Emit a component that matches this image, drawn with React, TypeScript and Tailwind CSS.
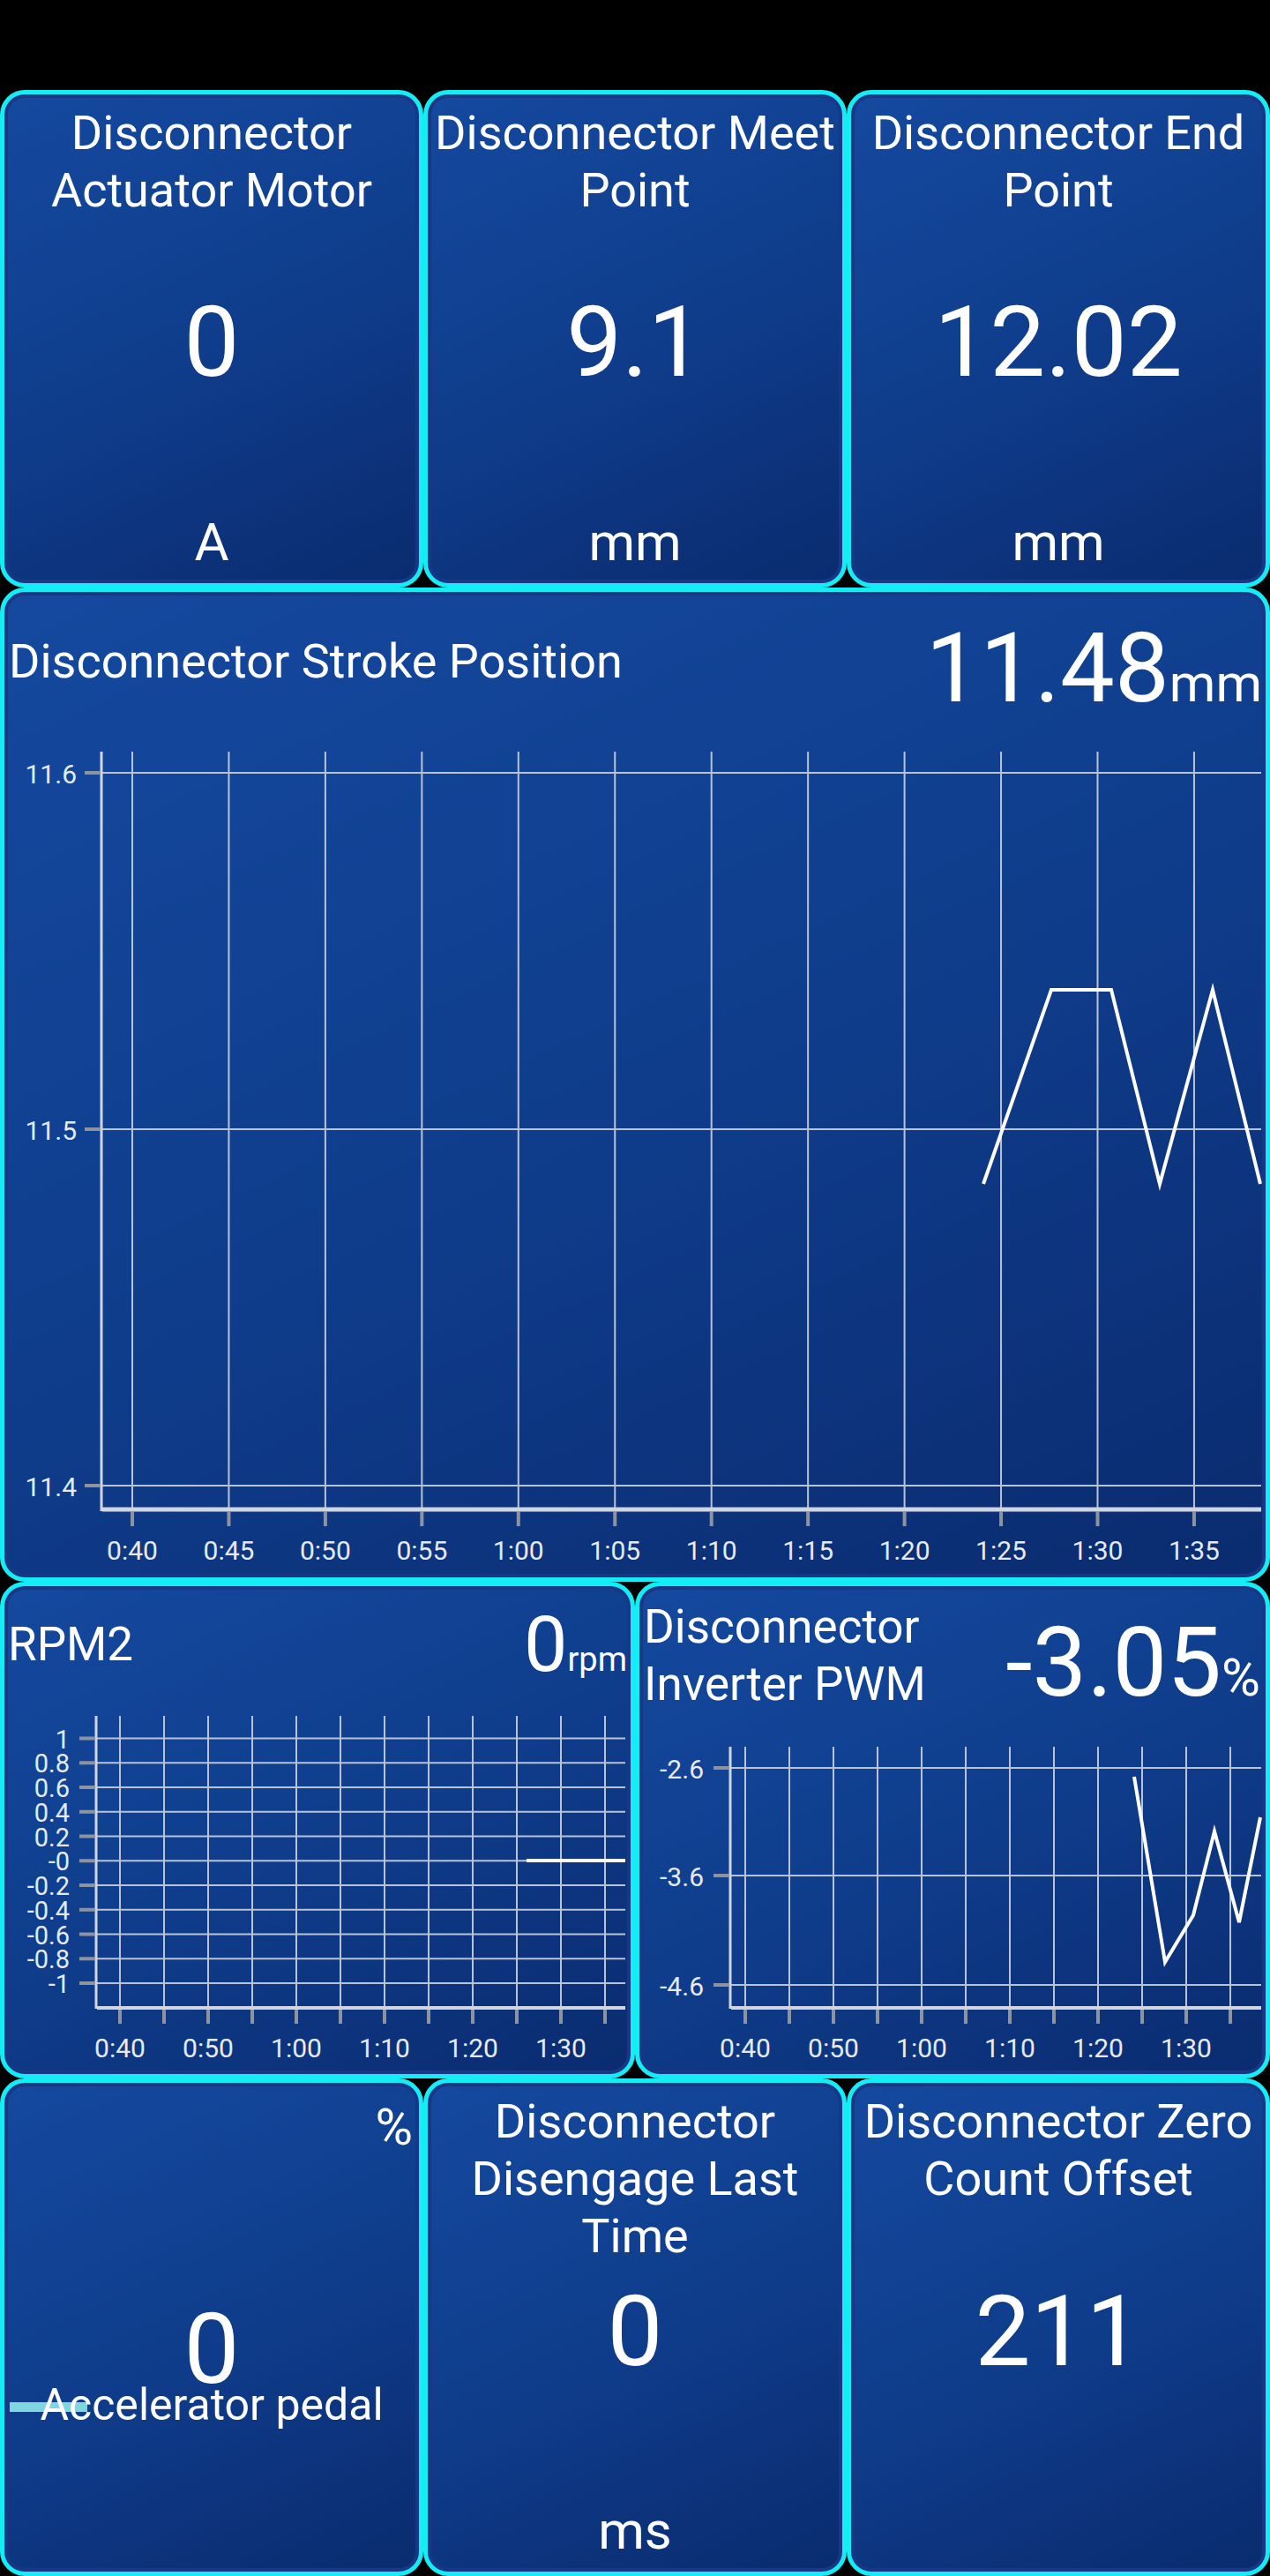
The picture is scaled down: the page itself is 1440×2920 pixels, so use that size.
import React from "react";

const tileCls =
  "rounded-[28px] border-[5px] border-[#14ecf6] bg-[linear-gradient(155deg,#14499f_0%,#0f3d8c_50%,#0a2b6f_100%)] shadow-[inset_0_0_0_4px_#1a3684] overflow-hidden text-white";

const GRID = "#b9c3d8";
const AXIS = "#cfd5e2";
const TICK = "#8d939f";
const LABEL = "#e6eaf2";

type StatProps = { lines: string[]; value: string; unit?: string };

function StatTile({ lines, value, unit }: StatProps) {
  return (
    <div className={`${tileCls} col-span-2 grid`}>
      <div className="[grid-area:1/1] self-start pt-[11px] text-center text-[54px] leading-[65px]">
        {lines.map((l) => (
          <div key={l} className="whitespace-nowrap">
            {l}
          </div>
        ))}
      </div>
      <div className="[grid-area:1/1] self-center mt-[9px] text-center text-[112px] leading-none">
        {value}
      </div>
      {unit ? (
        <div className="[grid-area:1/1] self-end pb-[16px] text-center text-[60px] leading-none">
          {unit}
        </div>
      ) : null}
    </div>
  );
}

function GaugeTile() {
  return (
    <div className={`${tileCls} col-span-2 grid`}>
      <div className="[grid-area:1/1] self-start justify-self-end pt-[21px] pr-[7px] text-[58px] leading-none">
        %
      </div>
      <div className="[grid-area:1/1] self-start justify-self-start ml-[6px] mt-[362px] h-[11px] w-[88px] bg-[#7fd6de]" />
      <div className="[grid-area:1/1] self-start mt-[246px] flex flex-col items-center">
        <div className="text-[112px] leading-none">0</div>
        <div className="-mt-[18px] whitespace-nowrap text-[50px] leading-none">Accelerator pedal</div>
      </div>
    </div>
  );
}

const bigXs = Array.from({ length: 12 }, (_, k) => 150 + 109.45 * k);
const bigXLabels = ["0:40", "0:45", "0:50", "0:55", "1:00", "1:05", "1:10", "1:15", "1:20", "1:25", "1:30", "1:35"];
const bigYs = [
  { y: 876, t: "11.6" },
  { y: 1280, t: "11.5" },
  { y: 1684, t: "11.4" },
];

function BigChart() {
  return (
    <svg width={1430} height={957} viewBox="5 831 1430 957" className="block shrink-0">
      {bigXs.map((x) => (
        <line key={`v${x}`} x1={x} x2={x} y1={852} y2={1710} stroke={GRID} strokeWidth={2} />
      ))}
      {bigYs.map(({ y }) => (
        <line key={`h${y}`} x1={115} x2={1430} y1={y} y2={y} stroke={GRID} strokeWidth={2} />
      ))}
      <line x1={115} x2={115} y1={852} y2={1713} stroke={AXIS} strokeWidth={3} />
      <line x1={116} x2={1430} y1={1711} y2={1711} stroke={AXIS} strokeWidth={5} />
      {bigYs.map(({ y }) => (
        <line key={`yt${y}`} x1={96} x2={114} y1={y} y2={y} stroke={TICK} strokeWidth={4} />
      ))}
      {bigXs.map((x) => (
        <line key={`xt${x}`} x1={x} x2={x} y1={1713} y2={1730} stroke={TICK} strokeWidth={4} />
      ))}
      {bigYs.map(({ y, t }) => (
        <text key={t} x={87} y={y + 1} textAnchor="end" dominantBaseline="central" fontSize={30} fill={LABEL}>
          {t}
        </text>
      ))}
      {bigXs.map((x, i) => (
        <text key={bigXLabels[i]} x={x} y={1757} textAnchor="middle" dominantBaseline="central" fontSize={30} fill={LABEL}>
          {bigXLabels[i]}
        </text>
      ))}
      <polyline
        points="1115,1342 1192,1122 1260,1122 1315,1342 1375,1122 1429,1342"
        fill="none"
        stroke="#ffffff"
        strokeWidth={4}
      />
    </svg>
  );
}

const rpmXs = Array.from({ length: 12 }, (_, k) => 136 + 50 * k);
const rpmYLabels = ["1", "0.8", "0.6", "0.4", "0.2", "-0", "-0.2", "-0.4", "-0.6", "-0.8", "-1"];
const rpmYs = rpmYLabels.map((t, k) => ({ t, y: 1970.5 + 27.75 * k }));
const xLabels6 = ["0:40", "0:50", "1:00", "1:10", "1:20", "1:30"];

function RpmChart() {
  return (
    <svg width={710} height={408} viewBox="5 1943 710 408" className="block shrink-0">
      {rpmXs.map((x) => (
        <line key={`v${x}`} x1={x} x2={x} y1={1945} y2={2275} stroke={GRID} strokeWidth={2} />
      ))}
      {rpmYs.map(({ y }) => (
        <line key={`h${y}`} x1={109} x2={709} y1={y} y2={y} stroke={GRID} strokeWidth={2} />
      ))}
      <line x1={109} x2={109} y1={1945} y2={2277} stroke={AXIS} strokeWidth={3} />
      <line x1={110} x2={709} y1={2276} y2={2276} stroke={AXIS} strokeWidth={4} />
      {rpmYs.map(({ y }) => (
        <line key={`yt${y}`} x1={90} x2={108} y1={y} y2={y} stroke={TICK} strokeWidth={4} />
      ))}
      {rpmXs.map((x) => (
        <line key={`xt${x}`} x1={x} x2={x} y1={2278} y2={2294} stroke={TICK} strokeWidth={4} />
      ))}
      {rpmYs.map(({ y, t }) => (
        <text key={t} x={79} y={y + 1} textAnchor="end" dominantBaseline="central" fontSize={29} fill={LABEL}>
          {t}
        </text>
      ))}
      {xLabels6.map((t, i) => (
        <text key={t} x={136 + 100 * i} y={2321} textAnchor="middle" dominantBaseline="central" fontSize={30} fill={LABEL}>
          {t}
        </text>
      ))}
      <line x1={597} x2={709} y1={2109} y2={2109} stroke="#ffffff" strokeWidth={4} />
    </svg>
  );
}

const pwmXs = Array.from({ length: 12 }, (_, k) => 845 + 50 * k);
const pwmYs = [
  { y: 2004, t: "-2.6" },
  { y: 2126, t: "-3.6" },
  { y: 2250, t: "-4.6" },
];

function PwmChart() {
  return (
    <svg width={710} height={408} viewBox="725 1943 710 408" className="block shrink-0">
      {pwmXs.map((x) => (
        <line key={`v${x}`} x1={x} x2={x} y1={1980} y2={2275} stroke={GRID} strokeWidth={2} />
      ))}
      {pwmYs.map(({ y }) => (
        <line key={`h${y}`} x1={828} x2={1430} y1={y} y2={y} stroke={GRID} strokeWidth={2} />
      ))}
      <line x1={828} x2={828} y1={1980} y2={2277} stroke={AXIS} strokeWidth={3} />
      <line x1={829} x2={1430} y1={2276} y2={2276} stroke={AXIS} strokeWidth={4} />
      {pwmYs.map(({ y }) => (
        <line key={`yt${y}`} x1={809} x2={827} y1={y} y2={y} stroke={TICK} strokeWidth={4} />
      ))}
      {pwmXs.map((x) => (
        <line key={`xt${x}`} x1={x} x2={x} y1={2278} y2={2294} stroke={TICK} strokeWidth={4} />
      ))}
      {pwmYs.map(({ y, t }) => (
        <text key={t} x={798} y={y + 1} textAnchor="end" dominantBaseline="central" fontSize={30} fill={LABEL}>
          {t}
        </text>
      ))}
      {xLabels6.map((t, i) => (
        <text key={t} x={845 + 100 * i} y={2321} textAnchor="middle" dominantBaseline="central" fontSize={30} fill={LABEL}>
          {t}
        </text>
      ))}
      <polyline
        points="1286,2014 1321,2224 1353,2171 1377,2076 1405,2179 1429,2060"
        fill="none"
        stroke="#ffffff"
        strokeWidth={4}
      />
    </svg>
  );
}

export default function App() {
  return (
    <div className="w-[1440px] h-[2920px] bg-black [font-family:Roboto,sans-serif] flex flex-col overflow-hidden">
      <div className="h-[102px] shrink-0 bg-black" />
      <div className="grid grid-cols-6 grid-rows-5 h-[2818px] shrink-0">
        <StatTile lines={["Disconnector", "Actuator Motor"]} value="0" unit="A" />
        <StatTile lines={["Disconnector Meet", "Point"]} value="9.1" unit="mm" />
        <StatTile lines={["Disconnector End", "Point"]} value="12.02" unit="mm" />

        <div className={`${tileCls} col-span-6 row-span-2 flex flex-col`}>
          <div className="h-[160px] shrink-0 flex items-start justify-between">
            <div className="pl-[5px] pt-[52px] whitespace-nowrap text-[54px] leading-none">
              Disconnector Stroke Position
            </div>
            <div className="pr-[4px] pt-[32px] flex items-baseline leading-none">
              <span className="text-[110px]">11.48</span>
              <span className="text-[60px]">mm</span>
            </div>
          </div>
          <BigChart />
        </div>

        <div className={`${tileCls} col-span-3 flex flex-col`}>
          <div className="h-[145px] shrink-0 flex items-start justify-between">
            <div className="pl-[4px] pt-[40px] text-[53px] leading-none">RPM2</div>
            <div className="pr-[4px] pt-[22px] flex items-baseline leading-none">
              <span className="text-[88px]">0</span>
              <span className="text-[38px]">rpm</span>
            </div>
          </div>
          <RpmChart />
        </div>

        <div className={`${tileCls} col-span-3 flex flex-col`}>
          <div className="h-[145px] shrink-0 flex items-start justify-between">
            <div className="pl-[5px] pt-[14px] text-[53px] leading-[65px] whitespace-nowrap">
              <div>Disconnector</div>
              <div>Inverter PWM</div>
            </div>
            <div className="pr-[6px] pt-[32px] flex items-baseline leading-none">
              <span className="text-[110px]">-3.05</span>
              <span className="text-[60px]">%</span>
            </div>
          </div>
          <PwmChart />
        </div>

        <GaugeTile />
        <StatTile lines={["Disconnector", "Disengage Last", "Time"]} value="0" unit="ms" />
        <StatTile lines={["Disconnector Zero", "Count Offset"]} value="211" />
      </div>
    </div>
  );
}
